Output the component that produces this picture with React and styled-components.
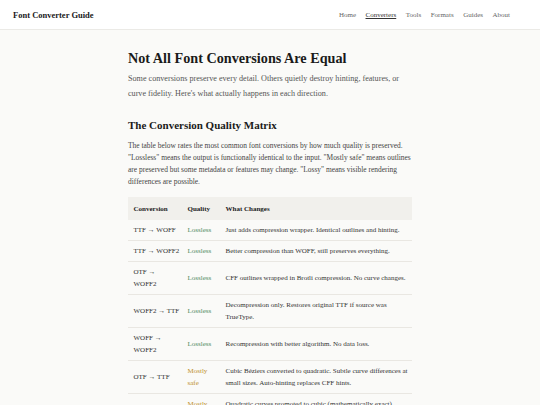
import React from "react";
import styled, { createGlobalStyle } from "styled-components";

const GlobalStyle = createGlobalStyle`
  * { box-sizing: border-box; }
  body {
    margin: 0;
    background: #fafaf8;
    font-family: "Liberation Serif", Georgia, serif;
    color: #222;
  }
`;

const NAV = ["Home", "Converters", "Tools", "Formats", "Guides", "About"];

// conversions that wrap in the narrow first column are split by hand
const ROWS = [
  { conv: "TTF → WOFF", quality: "Lossless", text: "Just adds compression wrapper. Identical outlines and hinting." },
  { conv: "TTF → WOFF2", quality: "Lossless", text: "Better compression than WOFF, still preserves everything." },
  { conv: "OTF →\nWOFF2", quality: "Lossless", text: "CFF outlines wrapped in Brotli compression. No curve changes." },
  { conv: "WOFF2 → TTF", quality: "Lossless", text: "Decompression only. Restores original TTF if source was TrueType." },
  { conv: "WOFF →\nWOFF2", quality: "Lossless", text: "Recompression with better algorithm. No data loss." },
  { conv: "OTF → TTF", quality: "Mostly\nsafe", text: "Cubic Béziers converted to quadratic. Subtle curve differences at small sizes. Auto-hinting replaces CFF hints." },
  { conv: "TTF → OTF", quality: "Mostly\nsafe", text: "Quadratic curves promoted to cubic (mathematically exact). Hinting is dropped and must be regenerated." },
];

const qualityColor = (q) => {
  if (q === "Lossless") return "#4f8a5f";
  if (q.startsWith("Mostly")) return "#c0912e";
  return "#b54a3a";
};

const App = () => {
  return (
    <>
      <GlobalStyle />
      <Header>
        <Logo>Font Converter Guide</Logo>
        <Nav>
          {NAV.map((item) => (
            <NavLink key={item} $active={item === "Converters"}>
              {item}
            </NavLink>
          ))}
        </Nav>
      </Header>
      <Main>
        <Title>Not All Font Conversions Are Equal</Title>
        <Lead>
          Some conversions preserve every detail. Others quietly destroy hinting, features, or
          curve fidelity. Here's what actually happens in each direction.
        </Lead>
        <SectionTitle>The Conversion Quality Matrix</SectionTitle>
        <Text>
          The table below rates the most common font conversions by how much quality is preserved.
          "Lossless" means the output is functionally identical to the input. "Mostly safe" means
          outlines are preserved but some metadata or features may change. "Lossy" means visible
          rendering differences are possible.
        </Text>
        <Table>
          <colgroup>
            <col style={{ width: 54 }} />
            <col style={{ width: 38 }} />
            <col />
          </colgroup>
          <thead>
            <tr>
              <Th>Conversion</Th>
              <Th>Quality</Th>
              <Th>What Changes</Th>
            </tr>
          </thead>
          <tbody>
            {ROWS.map((row) => (
              <tr key={row.conv}>
                <Td $pre>{row.conv}</Td>
                <Td $pre>
                  <Quality $color={qualityColor(row.quality)}>{row.quality}</Quality>
                </Td>
                <Td>{row.text}</Td>
              </tr>
            ))}
          </tbody>
        </Table>
      </Main>
    </>
  );
};

const Header = styled.header`
  height: 30px;
  display: flex;
  justify-content: space-between;
  align-items: center;
  padding: 0 30px 0 13px;
  background: #fff;
  border-bottom: 1px solid #ebeae6;
`;

const Logo = styled.div`
  font-size: 8.5px;
  font-weight: 700;
  color: #1a1a1a;
`;

const Nav = styled.nav`
  display: flex;
  gap: 9.5px;
`;

const NavLink = styled.a`
  font-size: 7px;
  color: ${(p) => (p.$active ? "#333" : "#666")};
  text-decoration: ${(p) => (p.$active ? "underline" : "none")};
  text-underline-offset: 1px;
  cursor: pointer;
`;

const Main = styled.main`
  width: 284px;
  margin: 0 auto;
  padding-top: 18px;
`;

const Title = styled.h1`
  margin: 0;
  font-size: 14.2px;
  line-height: 20px;
  font-weight: 700;
  color: #1a1a1a;
`;

const Lead = styled.p`
  margin: 3px 0 0;
  font-size: 8.15px;
  line-height: 15px;
  color: #555;
`;

const SectionTitle = styled.h2`
  margin: 17px 0 0;
  font-size: 11px;
  line-height: 14px;
  font-weight: 700;
  color: #1a1a1a;
`;

const Text = styled.p`
  margin: 8px 0 0;
  font-size: 7.45px;
  line-height: 12px;
  color: #444;
`;

const Table = styled.table`
  width: 100%;
  margin-top: 9px;
  border-collapse: collapse;
  table-layout: fixed;
  font-size: 7px;
`;

const Th = styled.th`
  text-align: left;
  font-weight: 700;
  color: #222;
  background: #f1f0ec;
  padding: 5.5px 1px 5.5px 5.5px;
  line-height: 12px;
`;

const Td = styled.td`
  padding: 4px 1px 4px 5.5px;
  line-height: 12px;
  color: #333;
  vertical-align: middle;
  border-bottom: 1px solid #e9e7e2;
  white-space: ${(p) => (p.$pre ? "pre" : "normal")};
`;

const Quality = styled.span`
  color: ${(p) => p.$color};
`;

export default App;
